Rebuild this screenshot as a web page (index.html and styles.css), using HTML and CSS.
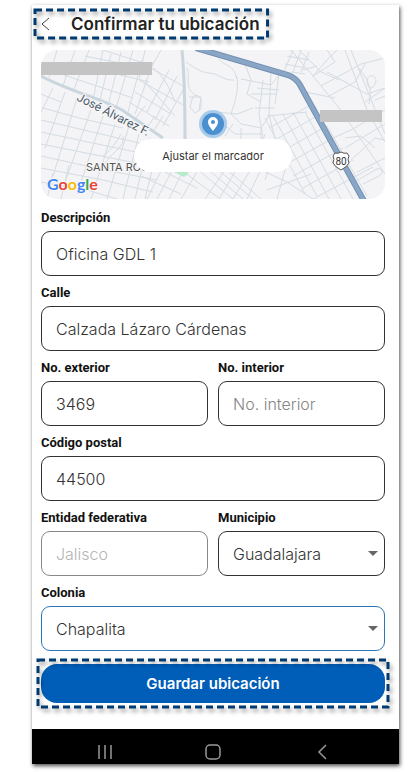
FILE: index.html
```html
<!DOCTYPE html>
<html lang="es">

<head>
    <meta charset="UTF-8" />
    <meta name="viewport" content="width=device-width, initial-scale=1.0" />
    <title>Confirmar tu ubicación</title>
    <link rel="stylesheet" href="styles.css">
</head>

<body>
    <div class="phone">
        <header class="header">
            <button type="button" class="back" aria-label="Regresar">
                <svg width="10" height="14" viewBox="0 0 10 14"><path d="M8 1 1 7l7 6" /></svg>
            </button>
            <h1>Confirmar tu ubicación</h1>
            <div class="highlight"><svg><rect width="100%" height="100%" /></svg></div>
        </header>

        <main>
            <div class="map">
                <svg class="map-canvas" viewBox="0 0 344 149" preserveAspectRatio="xMidYMid slice">
                    <!-- streets, left side -->
                    <g class="street">
                        <path d="M16 0 8 28M34 0 22 36M48 0 32 42M62 0 52 50M70 4 58 54M80 2 66 60M92 0 74 62M101 10 86 66M28 12l80 20M20 24l72 24M44 6l60 12M62 0l50 16M104 0l-6 30M112 12l-18 52M120 0l-10 18M108 17l36 20M98 30l44 25M94 42l36 22M88 52l40 24" />
                        <path d="M112 18c10 8 16 18 22 34M104 32l30 34M128 20l-22 42M136 26l-22 44M142 40l-20 36" />
                        <path d="M12 38 0 62M24 42 4 98M36 48 12 126M50 60 24 132M62 66 36 144M74 74 50 149M88 76 66 149M98 84 82 149M108 88 94 149M118 92l-14 57" />
                        <path d="M0 44l20 8M2 58l36 10 44 10M0 70l60 14 42 10M0 82l66 14 48 10M0 94l70 14 40 8M0 106l64 14 52 10M0 118l62 12 50 12M0 132l46 8 30 9M6 149l6-26M20 149l8-34" />
                        <path d="M80 84c-6 10-8 14-18 22M82 86c2 12-12 16-18 28M106 78l8-12M112 82l10-16M92 72l12-16" />
                        <path d="M106 149l18-36M116 149l22-42M128 149l20-40M140 149l20-34M100 126l40 18M108 114l48 24M132 114l46 34" />
                    </g>
                    <!-- streets, centre -->
                    <g class="street">
                        <path d="M145 12c6 4 14 10 22 11 12 0 14 8 26 7M148 47h12l-2 14M151 50c0-6 8-6 9 0v9l-6 4-5-6zM146 18c4 12-4 20 10 28M178 9c6 8 14 4 18 20" />
                        <path d="M196 26c2 14-2 26-6 38M190 64l10 10 20 4 8-12M176 62l20 2 16-6M204 14l6 16-4 14 14 8M200 29l30 6 10-12M210 44h26M214 58h20M222 30l-4 34 6 36M230 22l-2 42 8 34M238 24l-4 30M216 38l22 2" />
                        <path d="M180 72l14 12M186 70l-12 16M192 74l-8 12M200 78v16M194 84h26M196 92h28M220 78v18" />
                        <path d="M150 114l42 35M158 112l44 37M170 114l42 35M184 118l36 31M164 149l22-32M178 149l20-34M192 149l18-30M206 149l14-30" />
                    </g>
                    <!-- streets, right side -->
                    <g class="street">
                        <path d="M252 0l-10 24M260 0l-8 22M268 2l-8 20M246 6l22 4M244 14l20 4M250 22l14 2" />
                        <path d="M250 0l22 26 26 32 46 66M258 0l20 20M272 26l22-14-8-12M272 26l14-16 10-10M280 36l40-22 24-6M288 46l26-14 10-18M276 20l22 10M304 0l22 60 18 32M310 0l34 84M286 22l40 22 18-6M318 18c8 12 14 18 10 36M324 52l20-14" />
                        <path d="M326 30c2-8 12-4 8 4-2 6-8 6-8-4M334 50l10-4M264 42l30 6M262 20l14-4" />
                        <path d="M224 68l40 76M232 66l44 80M242 64l46 85M252 62l48 87M264 62l48 87M228 78l40-22M234 90l42-24M240 102l46-26M246 114l46-26M252 126l50-28M262 138l50-28M272 149l60-32M226 66l40-4M224 84l-10 34M236 96l-12 34M246 112l-10 37" />
                        <path d="M292 88l18-8 34-20M304 98l40-24M310 110l24-22 10 2M316 122l28-14M322 134l16-8c6-4 2-10-4-6l-24 14M304 88l16-2 14 12M216 118l30 14 26 17M226 140l44-16M286 76l40 70" />
                    </g>
                    <path class="park" d="M133 122l6-4 9 5-5 4z" />
                    <path class="avenue" d="M0 26c30 16 66 24 84 36l38 26" />
                    <path class="avenue" d="M141 0c3 30 3 60 3 92" />
                    <path class="highway-edge" d="M155-2l92 27q8 3 12 10l64 116" />
                    <path class="highway" d="M155-2l92 27q8 3 12 10l64 116" />
                    <rect class="mask" x="0" y="12" width="111" height="13" />
                    <rect class="mask" x="279" y="60" width="62" height="12" />
                    <path class="shield" d="M294 103q3 1 6-1 3 2 6 1l2 3q-2 3 0 7-2 4-8 7-6-3-8-7 2-4 0-7z" />
                    <text class="route" x="300" y="115">80</text>
                    <text class="street-name" transform="translate(35 50) rotate(27)">José Álvarez F.</text>
                    <text class="district" x="45" y="121">SANTA ROSA</text>
                    <text class="google" x="6" y="140"><tspan class="g-blue">G</tspan><tspan class="g-red">o</tspan><tspan class="g-yellow">o</tspan><tspan class="g-blue">g</tspan><tspan class="g-green">l</tspan><tspan class="g-red">e</tspan></text>
                    <circle class="pin-halo" cx="172" cy="74" r="14" />
                    <circle class="pin-disc" cx="172" cy="74" r="11" />
                    <path class="pin" fill-rule="evenodd" d="M172 67a5 5 0 0 1 5 5c0 3.500-5 9-5 9s-5-5.500-5-9a5 5 0 0 1 5-5zm0 3a2 2 0 1 0 0 4 2 2 0 0 0 0-4z" />
                </svg>
                <button type="button" class="adjust">Ajustar el marcador</button>
            </div>

            <form class="form">
                <div class="field">
                    <label for="descripcion">Descripción</label>
                    <input type="text" id="descripcion" value="Oficina GDL 1" />
                </div>
                <div class="field">
                    <label for="calle">Calle</label>
                    <input type="text" id="calle" value="Calzada Lázaro Cárdenas" />
                </div>
                <div class="row">
                    <div class="field">
                        <label for="exterior">No. exterior</label>
                        <input type="text" id="exterior" value="3469" />
                    </div>
                    <div class="field">
                        <label for="interior">No. interior</label>
                        <input type="text" id="interior" placeholder="No. interior" />
                    </div>
                </div>
                <div class="field">
                    <label for="cp">Código postal</label>
                    <input type="text" id="cp" value="44500" />
                </div>
                <div class="row">
                    <div class="field">
                        <label for="entidad">Entidad federativa</label>
                        <input type="text" id="entidad" value="Jalisco" disabled />
                    </div>
                    <div class="field">
                        <label for="municipio">Municipio</label>
                        <div class="select">
                            <select id="municipio">
                                <option>Guadalajara</option>
                            </select>
                        </div>
                    </div>
                </div>
                <div class="field">
                    <label for="colonia">Colonia</label>
                    <div class="select">
                        <select id="colonia" class="active">
                            <option>Chapalita</option>
                        </select>
                    </div>
                </div>
                <div class="actions">
                    <button type="submit" class="save">Guardar ubicación</button>
                    <div class="highlight"><svg><rect width="100%" height="100%" /></svg></div>
                </div>
            </form>
        </main>

        <nav class="navbar">
            <button type="button" aria-label="Recientes">
                <svg width="16" height="16" viewBox="0 0 16 16"><path d="M2 1v14M8 1v14M14 1v14" /></svg>
            </button>
            <button type="button" aria-label="Inicio">
                <svg width="16" height="16" viewBox="0 0 16 16"><rect x="1" y="1" width="14" height="14" rx="4" /></svg>
            </button>
            <button type="button" aria-label="Atrás">
                <svg width="16" height="16" viewBox="0 0 16 16"><path d="M12 1 5 8l7 7" /></svg>
            </button>
        </nav>
    </div>
</body>

</html>
```
FILE: styles.css
```css
* {
    box-sizing: border-box;
}

body {
    margin: 0;
    padding: 5px 9px 9px 32px;
    background: white;
    font-family: Inter, "Liberation Sans", sans-serif;
    color: #222;
}

button {
    font-family: inherit;
    border: none;
    cursor: pointer;
}

.phone {
    background: white;
    box-shadow: 1px 2px 4px rgba(0, 0, 0, 0.7);
}

/* header */
.header {
    position: relative;
    display: flex;
    align-items: center;
    gap: 20px;
    width: fit-content;
    height: 35px;
    margin-left: 1px;
    padding: 2px 9px 0 8px;
}

.back {
    display: flex;
    padding: 0;
    background: none;
}

.back svg {
    fill: none;
    stroke: #444;
    stroke-width: 1;
}

h1 {
    margin: 0;
    font-size: 17px;
    line-height: 20px;
    font-weight: 600;
}

.highlight {
    position: absolute;
    inset: 5px 1px 2px 2px;
    pointer-events: none;
}

.highlight svg {
    display: block;
    width: 100%;
    height: 100%;
    overflow: visible;
    fill: none;
    stroke: #003a70;
    stroke-width: 3;
    stroke-dasharray: 7 4;
    filter: drop-shadow(2px 3px 2px rgba(0, 0, 0, 0.4));
}

main {
    padding: 10px 14px 26px 9px;
}

/* map */
.map {
    position: relative;
    height: 149px;
    border-radius: 16px;
    overflow: hidden;
    background: #f4f3f5;
}

.map-canvas {
    display: block;
    width: 100%;
    height: 100%;
}

.street {
    fill: none;
    stroke: #d3dce3;
    stroke-width: 1;
}

.avenue {
    fill: none;
    stroke: #cad6dd;
    stroke-width: 3;
}

.highway,
.highway-edge {
    fill: none;
    stroke: #8aa6c6;
    stroke-width: 4;
}

.highway-edge {
    stroke: #7290b3;
    stroke-width: 6;
}

.park {
    fill: #b5ebc9;
}

.mask {
    fill: #c4c4c4;
}

.shield {
    fill: white;
    stroke: #555;
    stroke-width: 1;
}

.route {
    font-family: Roboto, sans-serif;
    font-size: 10px;
    text-anchor: middle;
    fill: #333;
}

.street-name,
.district,
.google {
    stroke: #f8f8f8;
    stroke-width: 2;
    paint-order: stroke;
}

.street-name {
    font-family: Roboto, sans-serif;
    font-size: 12px;
    fill: #4d5b6b;
}

.district {
    font-size: 11px;
    fill: #555;
}

.google {
    font-family: Lato, sans-serif;
    font-size: 16px;
    font-weight: 700;
}

.g-blue {
    fill: #4285f4;
}

.g-red {
    fill: #ea4335;
}

.g-yellow {
    fill: #fbbc05;
}

.g-green {
    fill: #34a853;
}

.pin-halo {
    fill: #a9cbea;
}

.pin-disc {
    fill: #4a90d0;
}

.pin {
    fill: white;
}

.adjust {
    position: absolute;
    top: 89px;
    left: 50%;
    transform: translateX(-50%);
    padding: 0 28px;
    height: 33px;
    border-radius: 17px;
    background: white;
    font-size: 11px;
    color: #333;
    white-space: nowrap;
}

/* form */
.form {
    display: flex;
    flex-direction: column;
    gap: 8px;
    padding-top: 10px;
}

.row {
    display: grid;
    grid-template-columns: 1fr 1fr;
    gap: 10px;
}

label {
    display: block;
    margin-bottom: 4px;
    font-family: Roboto, sans-serif;
    font-size: 13px;
    line-height: 18px;
    font-weight: 700;
    color: #111;
}

input,
select {
    display: block;
    width: 100%;
    height: 45px;
    padding: 0 14px;
    border: 1px solid #333;
    border-radius: 9px;
    background: white;
    font-family: inherit;
    font-size: 16px;
    font-weight: 300;
    color: #333;
    outline: none;
}

input::placeholder {
    color: #858585;
}

input:disabled {
    border-color: #888;
    color: #b5b5b5;
}

.select {
    position: relative;
}

.select::after {
    content: "";
    position: absolute;
    top: 20px;
    right: 7px;
    border: 5px solid transparent;
    border-top-color: #666;
    border-bottom: none;
    pointer-events: none;
}

select {
    appearance: none;
}

select.active {
    border-color: #2f76b8;
}

.actions {
    position: relative;
    margin-top: 5px;
}

.actions .highlight {
    inset: -4px -3px;
}

.save {
    display: block;
    width: 100%;
    height: 39px;
    border-radius: 16px;
    background: #005eb8;
    color: white;
    font-size: 15px;
    font-weight: 600;
}

/* system bar */
.navbar {
    display: grid;
    grid-template-columns: repeat(3, 1fr);
    justify-items: center;
    height: 35px;
    padding: 15px 23px 0 19px;
    background: black;
}

.navbar button {
    display: flex;
    height: 16px;
    padding: 0;
    background: none;
}

.navbar svg {
    fill: none;
    stroke: #999;
    stroke-width: 1.5;
}
```
